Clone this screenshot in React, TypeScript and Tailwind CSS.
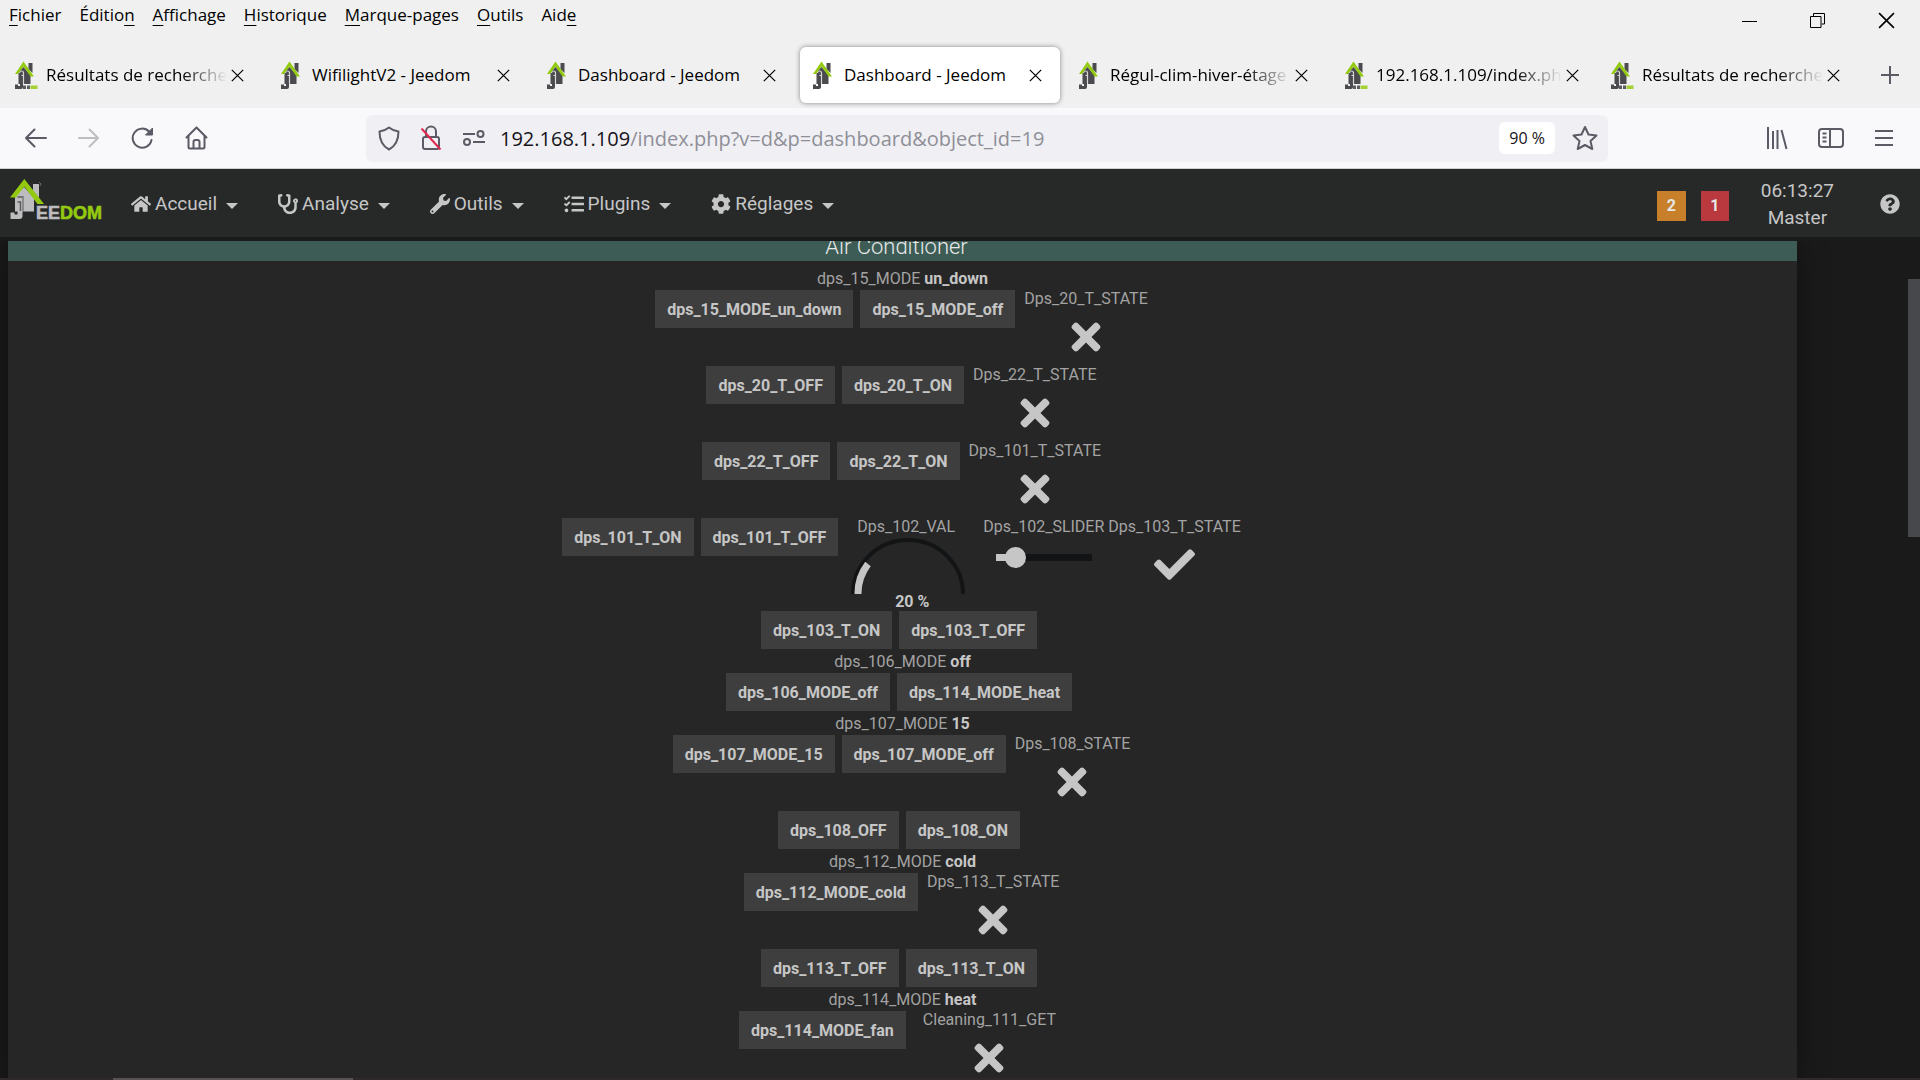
import React from 'react';
import clsx from 'clsx';
import {
  FaCheck,
  FaCog,
  FaHome,
  FaQuestionCircle,
  FaStethoscope,
  FaTasks,
  FaTimes,
  FaWrench,
} from 'react-icons/fa';
import type { IconType } from 'react-icons';

const menuItems = [
  ['', 'F', 'ichier'],
  ['Éditio', 'n', ''],
  ['', 'A', 'ffichage'],
  ['', 'H', 'istorique'],
  ['', 'M', 'arque-pages'],
  ['', 'O', 'utils'],
  ['Aid', 'e', ''],
];

const tabs = [
  { title: 'Résultats de recherche', cut: true, full: true },
  { title: 'WifilightV2 - Jeedom' },
  { title: 'Dashboard - Jeedom' },
  { title: 'Dashboard - Jeedom', active: true },
  { title: 'Régul-clim-hiver-étage', cut: true },
  { title: '192.168.1.109/index.ph', cut: true, full: true },
  { title: 'Résultats de recherche', cut: true, full: true },
];

const navItems: { label: string; icon: IconType }[] = [
  { label: 'Accueil', icon: FaHome },
  { label: 'Analyse', icon: FaStethoscope },
  { label: 'Outils', icon: FaWrench },
  { label: 'Plugins', icon: FaTasks },
  { label: 'Réglages', icon: FaCog },
];

const Favicon: React.FC<{ full?: boolean }> = ({ full }) => (
  <svg width="24" height="30" viewBox="0 0 24 30" className="shrink-0">
    <path d="M14.500 3h4v10l-4-4z" fill="#4a4a4f" />
    <path d="M4.500 12l5-5 7 8v9h-12z" fill="#4a4a4f" />
    <path d="M5.500 13q0-2 2-2t2 2v11" fill="none" stroke="#d8d8d8" strokeWidth="1.200" />
    <path d="M7.500 15.500h2" stroke="#d8d8d8" />
    <path d="M1 24.500h3v1.500h2v-3h3v4q0 2-2 2H1z" fill="#4a4a4f" />
    <path d="M1 14L9.500 1.500 20 16.500h-3.500L9.500 6.500 4 14z" fill="#93c90f" />
    {full && <path d="M9 25.500h3v3.500H9zM13 25.500h3v3.500h-3z" fill="#5c5c60" />}
    {full && <path d="M16.500 25.500h7v3.500h-7z" fill="#a3d133" />}
  </svg>
);

const CloseIcon: React.FC<{ size: number }> = ({ size }) => (
  <svg width={size} height={size} viewBox="0 0 16 16" fill="none" stroke="currentColor" strokeWidth="1.500">
    <path d="M1 1l14 14M15 1L1 15" />
  </svg>
);

const JeedomLogo: React.FC = () => (
  <svg width="96" height="44" viewBox="0 0 96 44" role="img" aria-label="Jeedom">
    <path d="M24 6h6v14l-6-7z" fill="#bdbdbf" />
    <path d="M30 4l2 2-1 2" fill="none" stroke="#6a6a6c" />
    <path d="M6 18l9-9 10 11v13.500H6z" fill="#bdbdbf" />
    {/* j */}
    <path d="M8.500 19h5M8.500 24h3v11" fill="none" stroke="#5a5b5b" strokeWidth="1.500" />
    <path d="M14 18v16" stroke="#5a5b5b" />
    <path d="M1.500 34.500h4v2h3V33h5v5q0 3-3 3h-9z" fill="#bdbdbf" />
    <path d="M1 19.500L15.300 1 35 26h-6.500L15.300 8.500 7 19.500z" fill="#93c90f" />
    <g fontFamily="Liberation Sans, sans-serif" fontWeight="700" fontSize="18" strokeWidth="0.600">
      <text x="27" y="41" fill="#bdbdbf" stroke="#bdbdbf">EE</text>
      <text x="51" y="41" fill="#93c90f" stroke="#93c90f">DOM</text>
    </g>
  </svg>
);

const BrowserTabs: React.FC = () => (
  <div className="flex items-center pl-[2px] pt-[18px]">
    {tabs.map((tab, i) => (
      <div
        key={i}
        className={clsx(
          'mr-[6px] flex h-14 w-[260px] shrink-0 items-center rounded-md pl-3 pr-[18px]',
          tab.active && 'bg-white shadow-[0_0_5px_rgba(0,0,0,0.45)]',
        )}
      >
        <Favicon full={tab.full} />
        <span
          className={clsx(
            'ml-2 flex-1 whitespace-nowrap text-[17px]',
            tab.cut && '[mask-image:linear-gradient(to_right,black_75%,transparent)]',
          )}
        >
          {tab.title}
        </span>
        <button type="button" aria-label="Fermer l’onglet" className="ml-1">
          <CloseIcon size={13} />
        </button>
      </div>
    ))}
    <button type="button" aria-label="Nouvel onglet" className="ml-auto mr-5 text-[#5b5b66]">
      <svg width="20" height="20" viewBox="0 0 20 20" stroke="currentColor" strokeWidth="2">
        <path d="M10 1v18M1 10h18" />
      </svg>
    </button>
  </div>
);

const BrowserToolbar: React.FC = () => (
  <div className="flex h-[61px] items-center border-b border-[#cfcfd3] bg-[#f9f9fb] pl-6 pr-[26px] text-[#5b5b66]">
    <div className="flex w-[342px] items-center gap-[31px]">
      <button type="button" aria-label="Précédent">
        <svg width="23" height="20" viewBox="0 0 23 20" fill="none" stroke="currentColor" strokeWidth="2">
          <path d="M22 10H2M10.500 1.500L2 10l8.500 8.500" strokeLinecap="round" strokeLinejoin="round" />
        </svg>
      </button>
      <button type="button" aria-label="Suivant" className="text-[#bdbdc2]">
        <svg width="22" height="20" viewBox="0 0 22 20" fill="none" stroke="currentColor" strokeWidth="2">
          <path d="M1 10h19M11.500 1.500L20 10l-8.500 8.500" strokeLinecap="round" strokeLinejoin="round" />
        </svg>
      </button>
      <button type="button" aria-label="Actualiser">
        <svg width="23" height="24" viewBox="0 0 23 24" fill="none" stroke="currentColor" strokeWidth="2">
          <path d="M20.500 14A9.500 9.500 0 1 1 18 5.500" strokeLinecap="round" />
          <path d="M21.500 2v7h-7z" fill="currentColor" strokeWidth="1" />
        </svg>
      </button>
      <button type="button" aria-label="Accueil">
        <svg width="23" height="24" viewBox="0 0 23 24" fill="none" stroke="currentColor" strokeWidth="2" strokeLinejoin="round">
          <path d="M1.500 11.500l10-10 10 10M3.500 10v11q0 1.500 1.500 1.500h13q1.500 0 1.500-1.500V10" strokeLinecap="round" />
          <path d="M8.500 22v-6q0-2 2-2h2q2 0 2 2v6" />
        </svg>
      </button>
    </div>
    <div className="flex h-[47px] w-[1242px] items-center rounded-md bg-[#f0f0f4] pl-3 pr-[9px]">
      <svg width="22" height="25" viewBox="0 0 22 25" fill="none" stroke="currentColor" strokeWidth="2" strokeLinejoin="round">
        <path d="M11 1.500c3 2.500 6 3.500 9.500 4 0 8-2 14-9.500 18-7.500-4-9.500-10-9.500-18 3.500-.5 6.500-1.500 9.500-4z" />
      </svg>
      <svg width="22" height="26" viewBox="0 0 22 26" fill="none" stroke="currentColor" strokeWidth="2" className="ml-5">
        <rect x="3" y="12" width="16" height="12" rx="2" />
        <path d="M6 12V6.500a5 5 0 0 1 10 0V12" />
        <path d="M1.500 3.500l19 21" stroke="#e22850" />
      </svg>
      <svg width="24" height="18" viewBox="0 0 24 18" fill="none" stroke="currentColor" strokeWidth="2" className="ml-5">
        <path d="M1 5h12M11 13h12" />
        <circle cx="18.500" cy="5" r="3" />
        <circle cx="5" cy="13" r="3" />
      </svg>
      <div className="ml-[14px] flex-1 whitespace-nowrap pt-[2px] text-xl text-[#8f8f98]">
        <span className="text-[#15141a]">192.168.1.109</span>/index.php?v=d&amp;p=dashboard&amp;object_id=19
      </div>
      <button type="button" className="rounded-md bg-white px-[10px] py-1 text-base text-[#15141a]">
        90 %
      </button>
      <button type="button" aria-label="Marquer cette page" className="ml-4">
        <svg width="28" height="26" viewBox="0 0 28 26" fill="none" stroke="currentColor" strokeWidth="2" strokeLinejoin="round">
          <path d="M14 2l3.500 7.500 8 1-6 5.500 1.800 8L14 20l-7.300 4 1.800-8-6-5.500 8-1z" />
        </svg>
      </button>
    </div>
    <div className="ml-auto flex items-center gap-[30px]">
      <button type="button" aria-label="Bibliothèque">
        <svg width="22" height="24" viewBox="0 0 22 24" stroke="currentColor" strokeWidth="2">
          <path d="M2 1v22M7 5v18M11.500 4v19M15.500 4l5 19" />
        </svg>
      </button>
      <button type="button" aria-label="Panneau latéral">
        <svg width="26" height="20" viewBox="0 0 26 20" fill="none" stroke="currentColor" strokeWidth="2">
          <rect x="1" y="1" width="24" height="18" rx="3" />
          <path d="M12 1v18M4.500 5.500h4M4.500 9.500h4M4.500 13.500h4" />
        </svg>
      </button>
      <button type="button" aria-label="Menu">
        <svg width="20" height="18" viewBox="0 0 20 18" stroke="currentColor" strokeWidth="2">
          <path d="M1 2h18M1 9h18M1 16h18" />
        </svg>
      </button>
    </div>
  </div>
);

const NavBar: React.FC = () => (
  <nav className="flex h-[68px] items-center bg-[#272929] pl-[9px] pr-5 pt-[2px] text-[19px] text-[#c6c6c6]">
    <a href="#accueil" className="-mt-2 mr-[26px]">
      <JeedomLogo />
    </a>
    <div className="flex items-center gap-10">
      {navItems.map(({ label, icon: Icon }) => (
        <button key={label} type="button" className="flex items-center">
          <Icon className="h-5 w-auto" />
          <span className="ml-1">{label}</span>
          <svg width="12" height="6" viewBox="0 0 12 6" fill="currentColor" className="ml-[9px] mt-1">
            <path d="M0 0h12L6 6z" />
          </svg>
        </button>
      ))}
    </div>
    <div className="ml-auto flex items-center">
      <span className="mt-1 flex h-[30px] w-[29px] items-center justify-center bg-[#c77f2a] text-base font-bold text-[#e6e6e6]">2</span>
      <span className="ml-[15px] mt-1 flex h-[30px] w-[28px] items-center justify-center bg-[#b9393e] text-base font-bold text-[#e6e6e6]">1</span>
      <div className="ml-8 text-center leading-[27px]">
        <div>06:13:27</div>
        <div>Master</div>
      </div>
      <button type="button" aria-label="Aide" className="ml-[46px]">
        <FaQuestionCircle size={20} />
      </button>
    </div>
  </nav>
);

const CmdButton: React.FC<{ name: string }> = ({ name }) => (
  <button type="button" className="mr-[7px] h-[38px] bg-[#3e3e3e] px-3 pt-[2px] font-bold text-[#c6c6c6]">
    {name}
  </button>
);

const CmdState: React.FC<{ name: string; on?: boolean; wide?: boolean }> = ({ name, on, wide }) => {
  const Icon = on ? FaCheck : FaTimes;
  return (
    <div className={clsx('flex h-[76px] flex-col items-center', wide ? 'px-[10px]' : 'px-[2px]')}>
      <span className="h-4 leading-[17px]">{name}</span>
      <Icon size={on ? 41 : 42} className="mt-[10px] text-[#c6c6c6]" />
    </div>
  );
};

const CmdInfo: React.FC<{ name: string; value: string }> = ({ name, value }) => (
  <div className="h-6 text-center leading-[25px]">
    {name} <strong className="text-[#c6c6c6]">{value}</strong>
  </div>
);

const CmdRow: React.FC<{ children: React.ReactNode }> = ({ children }) => (
  <div className="flex items-start justify-center">{children}</div>
);

const Gauge: React.FC = () => (
  <div className="mx-[6px] flex h-[93px] w-[114px] flex-col items-center">
    <span className="mr-1 h-4 leading-[17px]">Dps_102_VAL</span>
    <svg width="114" height="56" viewBox="0 0 114 56" fill="none" className="mt-1">
      <path d="M2 56a55 54 0 0 1 110 0" stroke="#131415" strokeWidth="4" />
      <path d="M7 56a50 49 0 0 1 10-30" stroke="#c6c6c6" strokeWidth="7" />
    </svg>
    <strong className="ml-2 leading-4 text-[#c6c6c6]">20 %</strong>
  </div>
);

const Slider: React.FC = () => (
  <div className="flex flex-col items-center">
    <label htmlFor="dps102" className="h-4 leading-[17px]">Dps_102_SLIDER</label>
    <input
      id="dps102"
      type="range"
      min={0}
      max={100}
      defaultValue={12}
      className="mt-[13px] h-5 w-[96px] appearance-none bg-transparent [&::-webkit-slider-runnable-track]:h-[7px] [&::-webkit-slider-runnable-track]:bg-[linear-gradient(to_right,#c6c6c6_20%,#131415_20%)] [&::-webkit-slider-thumb]:-mt-[7px] [&::-webkit-slider-thumb]:size-[21px] [&::-webkit-slider-thumb]:appearance-none [&::-webkit-slider-thumb]:rounded-full [&::-webkit-slider-thumb]:bg-[#c6c6c6]"
    />
  </div>
);

const AirConditioner: React.FC = () => (
  <section className="ml-2 mr-[123px] bg-[#262626] text-base text-[#a3a3a3] shadow-[0_0_28px_rgba(0,0,0,0.4)]">
    <div className="flex h-5 items-end justify-center overflow-hidden bg-[#3c5c55] pr-3">
      <h2 className="text-[22px] font-light leading-[28px] text-[#e8e8e8]">Air Conditioner</h2>
    </div>
    <div className="pt-[5px]">
      <CmdInfo name="dps_15_MODE" value="un_down" />
      <CmdRow>
        <CmdButton name="dps_15_MODE_un_down" />
        <CmdButton name="dps_15_MODE_off" />
        <CmdState name="Dps_20_T_STATE" />
      </CmdRow>
      <CmdRow>
        <CmdButton name="dps_20_T_OFF" />
        <CmdButton name="dps_20_T_ON" />
        <CmdState name="Dps_22_T_STATE" />
      </CmdRow>
      <CmdRow>
        <CmdButton name="dps_22_T_OFF" />
        <CmdButton name="dps_22_T_ON" />
        <CmdState name="Dps_101_T_STATE" />
      </CmdRow>
      <CmdRow>
        <CmdButton name="dps_101_T_ON" />
        <CmdButton name="dps_101_T_OFF" />
        <Gauge />
        <div className="ml-3 flex gap-[2px]">
          <Slider />
          <CmdState name="Dps_103_T_STATE" on />
        </div>
      </CmdRow>
      <CmdRow>
        <CmdButton name="dps_103_T_ON" />
        <CmdButton name="dps_103_T_OFF" />
      </CmdRow>
      <CmdInfo name="dps_106_MODE" value="off" />
      <CmdRow>
        <CmdButton name="dps_106_MODE_off" />
        <CmdButton name="dps_114_MODE_heat" />
      </CmdRow>
      <CmdInfo name="dps_107_MODE" value="15" />
      <CmdRow>
        <CmdButton name="dps_107_MODE_15" />
        <CmdButton name="dps_107_MODE_off" />
        <CmdState name="Dps_108_STATE" />
      </CmdRow>
      <CmdRow>
        <CmdButton name="dps_108_OFF" />
        <CmdButton name="dps_108_ON" />
      </CmdRow>
      <CmdInfo name="dps_112_MODE" value="cold" />
      <CmdRow>
        <CmdButton name="dps_112_MODE_cold" />
        <CmdState name="Dps_113_T_STATE" />
      </CmdRow>
      <CmdRow>
        <CmdButton name="dps_113_T_OFF" />
        <CmdButton name="dps_113_T_ON" />
      </CmdRow>
      <CmdInfo name="dps_114_MODE" value="heat" />
      <CmdRow>
        <CmdButton name="dps_114_MODE_fan" />
        <CmdState name="Cleaning_111_GET" wide />
      </CmdRow>
    </div>
  </section>
);

const App: React.FC = () => {
  return (
    <div className="flex h-screen flex-col overflow-hidden bg-[#1a1a1a]">
      {/* Browser chrome */}
      <header className="bg-[#f0f0f0] font-['Open_Sans',sans-serif] text-black">
        <div className="flex h-[29px] items-center pl-[9px]">
          <div className="flex gap-[18px] text-[17px]">
            {menuItems.map(([before, key, after]) => (
              <button key={before + key + after} type="button">
                {before}
                <span className="underline underline-offset-4">{key}</span>
                {after}
              </button>
            ))}
          </div>
          <div className="ml-auto mr-[25px] mt-3 flex items-center gap-[53px]">
            <button type="button" aria-label="Réduire">
              <svg width="15" height="16" viewBox="0 0 15 16" stroke="currentColor">
                <path d="M0 8.500h15" />
              </svg>
            </button>
            <button type="button" aria-label="Restaurer">
              <svg width="15" height="15" viewBox="0 0 15 15" fill="none" stroke="currentColor">
                <path d="M.5 3.500h10.500v11H.5zM3.500 3.500V.5h11v10.500h-3" />
              </svg>
            </button>
            <button type="button" aria-label="Fermer">
              <CloseIcon size={17} />
            </button>
          </div>
        </div>
        <BrowserTabs />
        <div className="h-[5px]" />
        <BrowserToolbar />
      </header>

      {/* Jeedom page */}
      <div className="flex min-h-0 flex-1 flex-col font-[Roboto,sans-serif]">
        <NavBar />
        <main className="relative mt-1 min-h-0 flex-1 overflow-hidden">
          <AirConditioner />
          <div className="absolute right-0 top-[38px] h-[258px] w-3 bg-[#47484b]" />
        </main>
        <div className="h-[2px] bg-[#2f292b] pl-[113px]">
          <div className="h-full w-[240px] bg-[#575353]" />
        </div>
      </div>
    </div>
  );
};

export default App;
